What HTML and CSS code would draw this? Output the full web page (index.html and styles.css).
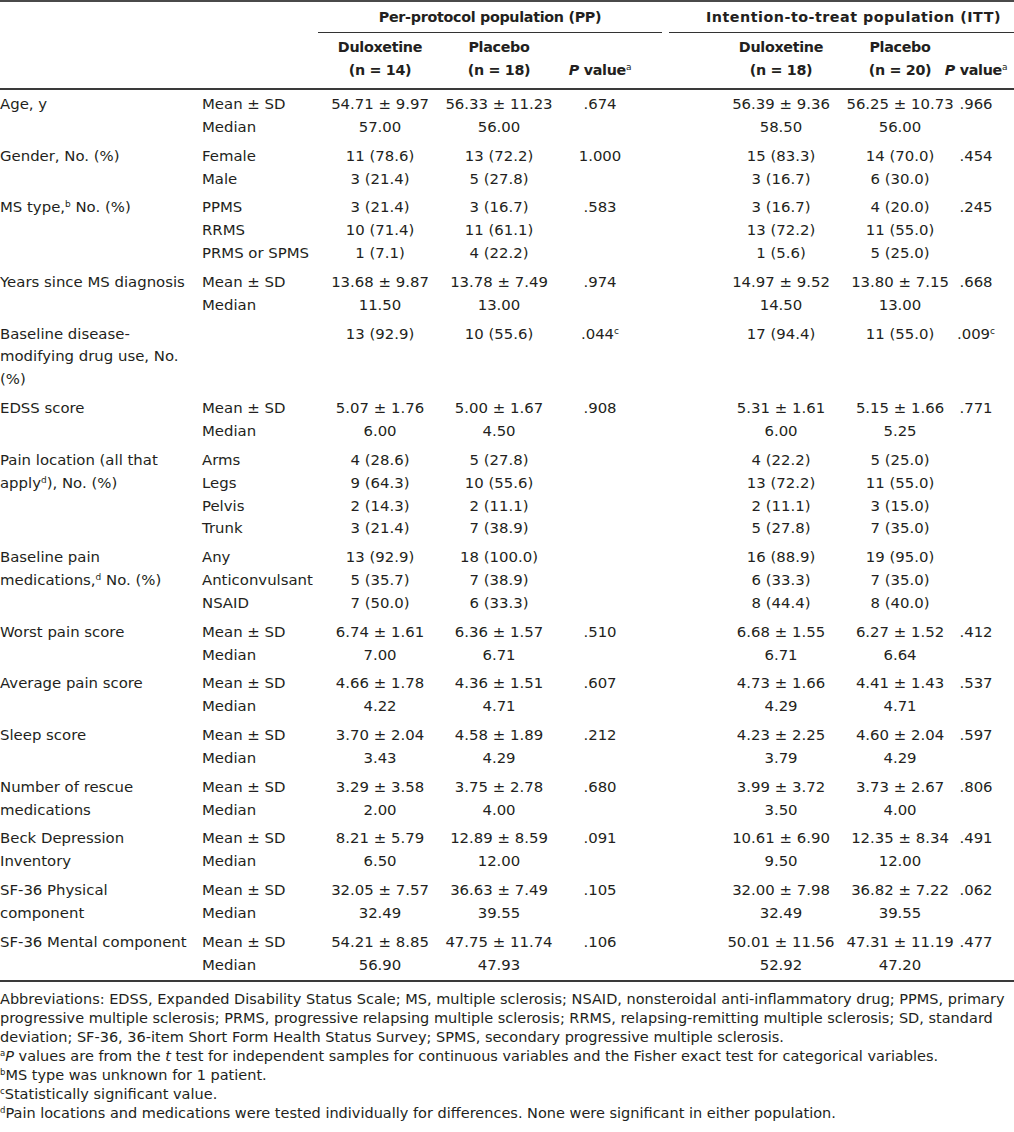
FILE: index.html
```html
<!DOCTYPE html>
<html>
<head>
<meta charset="utf-8">
<link rel="stylesheet" href="styles.css">
</head>
<body>
<div class="page">
  <div class="grid thead">
    <div class="hcell blank span2"></div>
    <div class="hcell group pp">Per-protocol population (PP)</div>
    <div class="hcell group itt">Intention-to-treat population (ITT)</div>

    <div class="hcell blank span2 r2"></div>
    <div class="hcell col r2"><div>Duloxetine</div><div>(n = 14)</div></div>
    <div class="hcell col r2"><div>Placebo</div><div>(n = 18)</div></div>
    <div class="hcell col r2 pcol"><div>&nbsp;</div><div><i>P</i> value<sup>a</sup></div></div>
    <div class="hcell col r2"><div>Duloxetine</div><div>(n = 18)</div></div>
    <div class="hcell col r2"><div>Placebo</div><div>(n = 20)</div></div>
    <div class="hcell col r2"><div>&nbsp;</div><div><i>P</i> value<sup>a</sup></div></div>
  </div>

  <div class="grid tbody">
    <div class="lab">Age, y</div>
    <div class="sub">Mean ± SD<br>Median</div>
    <div class="num"><div>54.71 ± 9.97</div><div>57.00</div></div>
    <div class="num"><div>56.33 ± 11.23</div><div>56.00</div></div>
    <div class="num pcol"><div>.674</div></div>
    <div class="num"><div>56.39 ± 9.36</div><div>58.50</div></div>
    <div class="num"><div>56.25 ± 10.73</div><div>56.00</div></div>
    <div class="num"><div>.966</div></div>

    <div class="lab">Gender, No. (%)</div>
    <div class="sub">Female<br>Male</div>
    <div class="num"><div>11 (78.6)</div><div>3 (21.4)</div></div>
    <div class="num"><div>13 (72.2)</div><div>5 (27.8)</div></div>
    <div class="num pcol"><div>1.000</div></div>
    <div class="num"><div>15 (83.3)</div><div>3 (16.7)</div></div>
    <div class="num"><div>14 (70.0)</div><div>6 (30.0)</div></div>
    <div class="num"><div>.454</div></div>

    <div class="lab">MS type,<sup>b</sup> No. (%)</div>
    <div class="sub">PPMS<br>RRMS<br>PRMS or SPMS</div>
    <div class="num"><div>3 (21.4)</div><div>10 (71.4)</div><div>1 (7.1)</div></div>
    <div class="num"><div>3 (16.7)</div><div>11 (61.1)</div><div>4 (22.2)</div></div>
    <div class="num pcol"><div>.583</div></div>
    <div class="num"><div>3 (16.7)</div><div>13 (72.2)</div><div>1 (5.6)</div></div>
    <div class="num"><div>4 (20.0)</div><div>11 (55.0)</div><div>5 (25.0)</div></div>
    <div class="num"><div>.245</div></div>

    <div class="lab">Years since MS diagnosis</div>
    <div class="sub">Mean ± SD<br>Median</div>
    <div class="num"><div>13.68 ± 9.87</div><div>11.50</div></div>
    <div class="num"><div>13.78 ± 7.49</div><div>13.00</div></div>
    <div class="num pcol"><div>.974</div></div>
    <div class="num"><div>14.97 ± 9.52</div><div>14.50</div></div>
    <div class="num"><div>13.80 ± 7.15</div><div>13.00</div></div>
    <div class="num"><div>.668</div></div>

    <div class="lab">Baseline disease-<br>modifying drug use, No.<br>(%)</div>
    <div class="sub"></div>
    <div class="num"><div>13 (92.9)</div></div>
    <div class="num"><div>10 (55.6)</div></div>
    <div class="num pcol"><div>.044<sup>c</sup></div></div>
    <div class="num"><div>17 (94.4)</div></div>
    <div class="num"><div>11 (55.0)</div></div>
    <div class="num"><div>.009<sup>c</sup></div></div>

    <div class="lab">EDSS score</div>
    <div class="sub">Mean ± SD<br>Median</div>
    <div class="num"><div>5.07 ± 1.76</div><div>6.00</div></div>
    <div class="num"><div>5.00 ± 1.67</div><div>4.50</div></div>
    <div class="num pcol"><div>.908</div></div>
    <div class="num"><div>5.31 ± 1.61</div><div>6.00</div></div>
    <div class="num"><div>5.15 ± 1.66</div><div>5.25</div></div>
    <div class="num"><div>.771</div></div>

    <div class="lab">Pain location (all that<br>apply<sup>d</sup>), No. (%)</div>
    <div class="sub">Arms<br>Legs<br>Pelvis<br>Trunk</div>
    <div class="num"><div>4 (28.6)</div><div>9 (64.3)</div><div>2 (14.3)</div><div>3 (21.4)</div></div>
    <div class="num"><div>5 (27.8)</div><div>10 (55.6)</div><div>2 (11.1)</div><div>7 (38.9)</div></div>
    <div class="num pcol"></div>
    <div class="num"><div>4 (22.2)</div><div>13 (72.2)</div><div>2 (11.1)</div><div>5 (27.8)</div></div>
    <div class="num"><div>5 (25.0)</div><div>11 (55.0)</div><div>3 (15.0)</div><div>7 (35.0)</div></div>
    <div class="num"></div>

    <div class="lab">Baseline pain<br>medications,<sup>d</sup> No. (%)</div>
    <div class="sub">Any<br>Anticonvulsant<br>NSAID</div>
    <div class="num"><div>13 (92.9)</div><div>5 (35.7)</div><div>7 (50.0)</div></div>
    <div class="num"><div>18 (100.0)</div><div>7 (38.9)</div><div>6 (33.3)</div></div>
    <div class="num pcol"></div>
    <div class="num"><div>16 (88.9)</div><div>6 (33.3)</div><div>8 (44.4)</div></div>
    <div class="num"><div>19 (95.0)</div><div>7 (35.0)</div><div>8 (40.0)</div></div>
    <div class="num"></div>

    <div class="lab">Worst pain score</div>
    <div class="sub">Mean ± SD<br>Median</div>
    <div class="num"><div>6.74 ± 1.61</div><div>7.00</div></div>
    <div class="num"><div>6.36 ± 1.57</div><div>6.71</div></div>
    <div class="num pcol"><div>.510</div></div>
    <div class="num"><div>6.68 ± 1.55</div><div>6.71</div></div>
    <div class="num"><div>6.27 ± 1.52</div><div>6.64</div></div>
    <div class="num"><div>.412</div></div>

    <div class="lab">Average pain score</div>
    <div class="sub">Mean ± SD<br>Median</div>
    <div class="num"><div>4.66 ± 1.78</div><div>4.22</div></div>
    <div class="num"><div>4.36 ± 1.51</div><div>4.71</div></div>
    <div class="num pcol"><div>.607</div></div>
    <div class="num"><div>4.73 ± 1.66</div><div>4.29</div></div>
    <div class="num"><div>4.41 ± 1.43</div><div>4.71</div></div>
    <div class="num"><div>.537</div></div>

    <div class="lab">Sleep score</div>
    <div class="sub">Mean ± SD<br>Median</div>
    <div class="num"><div>3.70 ± 2.04</div><div>3.43</div></div>
    <div class="num"><div>4.58 ± 1.89</div><div>4.29</div></div>
    <div class="num pcol"><div>.212</div></div>
    <div class="num"><div>4.23 ± 2.25</div><div>3.79</div></div>
    <div class="num"><div>4.60 ± 2.04</div><div>4.29</div></div>
    <div class="num"><div>.597</div></div>

    <div class="lab">Number of rescue<br>medications</div>
    <div class="sub">Mean ± SD<br>Median</div>
    <div class="num"><div>3.29 ± 3.58</div><div>2.00</div></div>
    <div class="num"><div>3.75 ± 2.78</div><div>4.00</div></div>
    <div class="num pcol"><div>.680</div></div>
    <div class="num"><div>3.99 ± 3.72</div><div>3.50</div></div>
    <div class="num"><div>3.73 ± 2.67</div><div>4.00</div></div>
    <div class="num"><div>.806</div></div>

    <div class="lab">Beck Depression<br>Inventory</div>
    <div class="sub">Mean ± SD<br>Median</div>
    <div class="num"><div>8.21 ± 5.79</div><div>6.50</div></div>
    <div class="num"><div>12.89 ± 8.59</div><div>12.00</div></div>
    <div class="num pcol"><div>.091</div></div>
    <div class="num"><div>10.61 ± 6.90</div><div>9.50</div></div>
    <div class="num"><div>12.35 ± 8.34</div><div>12.00</div></div>
    <div class="num"><div>.491</div></div>

    <div class="lab">SF-36 Physical<br>component</div>
    <div class="sub">Mean ± SD<br>Median</div>
    <div class="num"><div>32.05 ± 7.57</div><div>32.49</div></div>
    <div class="num"><div>36.63 ± 7.49</div><div>39.55</div></div>
    <div class="num pcol"><div>.105</div></div>
    <div class="num"><div>32.00 ± 7.98</div><div>32.49</div></div>
    <div class="num"><div>36.82 ± 7.22</div><div>39.55</div></div>
    <div class="num"><div>.062</div></div>

    <div class="lab">SF-36 Mental component</div>
    <div class="sub">Mean ± SD<br>Median</div>
    <div class="num"><div>54.21 ± 8.85</div><div>56.90</div></div>
    <div class="num"><div>47.75 ± 11.74</div><div>47.93</div></div>
    <div class="num pcol"><div>.106</div></div>
    <div class="num"><div>50.01 ± 11.56</div><div>52.92</div></div>
    <div class="num"><div>47.31 ± 11.19</div><div>47.20</div></div>
    <div class="num"><div>.477</div></div>
  </div>

  <div class="notes">
    <p>Abbreviations: EDSS, Expanded Disability Status Scale; MS, multiple sclerosis; NSAID, nonsteroidal anti-inflammatory drug; PPMS, primary<br>progressive multiple sclerosis; PRMS, progressive relapsing multiple sclerosis; RRMS, relapsing-remitting multiple sclerosis; SD, standard<br>deviation; SF-36, 36-item Short Form Health Status Survey; SPMS, secondary progressive multiple sclerosis.</p>
    <p><sup>a</sup><i>P</i> values are from the <i>t</i> test for independent samples for continuous variables and the Fisher exact test for categorical variables.</p>
    <p><sup>b</sup>MS type was unknown for 1 patient.</p>
    <p><sup>c</sup>Statistically significant value.</p>
    <p><sup>d</sup>Pain locations and medications were tested individually for differences. None were significant in either population.</p>
  </div>
</div>
</body>
</html>
```

FILE: styles.css
```css
html, body {
  margin: 0;
  padding: 0;
  background: #ffffff;
}
body {
  font-family: "DejaVu Sans", "Open Sans", sans-serif;
  color: #231f20;
  font-size: 14.9px;
}
.page {
  width: 1014px;
}
.grid {
  display: grid;
  grid-template-columns: 202px 116px 124px 114px 144px 162px 76px 76px;
  width: 1014px;
}
.thead {
  border-top: 2px solid #4a4a4a;
  border-bottom: 2px solid #3a3a3a;
  line-height: 23px;
}
.hcell {
  font-size: 14.3px;
  font-weight: 700;
  white-space: nowrap;
  letter-spacing: -0.3px;
}
.span2 {
  grid-column: 1 / span 2;
}
.group {
  text-align: center;
  padding-top: 4px;
  padding-bottom: 3px;
  border-bottom: 1px solid #333;
}
.group.pp {
  grid-column: 3 / span 3;
  margin-right: 38px;
}
.group.itt {
  grid-column: 6 / span 3;
  margin-left: -31px;
  padding-left: 24px;
  letter-spacing: 0.5px;
}
.col {
  display: flex;
  flex-direction: column;
  align-items: center;
  padding-top: 3px;
  padding-bottom: 6px;
}
.col.pcol {
  padding-right: 56px;
}
.hcell sup {
  font-weight: 400;
}
sup {
  font-size: 9px;
  line-height: 0;
  vertical-align: 5px;
}
.tbody {
  border-bottom: 2px solid #3a3a3a;
  line-height: 22.85px;
}
.tbody > div {
  padding: 3px 0;
  white-space: nowrap;
}
.num {
  display: flex;
  flex-direction: column;
  align-items: center;
}
.num.pcol {
  padding-right: 56px;
}
.notes {
  padding-top: 8px;
  font-size: 14.5px;
  line-height: 19px;
}
.notes p {
  margin: 0;
  white-space: nowrap;
}
.notes sup {
  font-size: 8.5px;
  vertical-align: 5px;
}
```
